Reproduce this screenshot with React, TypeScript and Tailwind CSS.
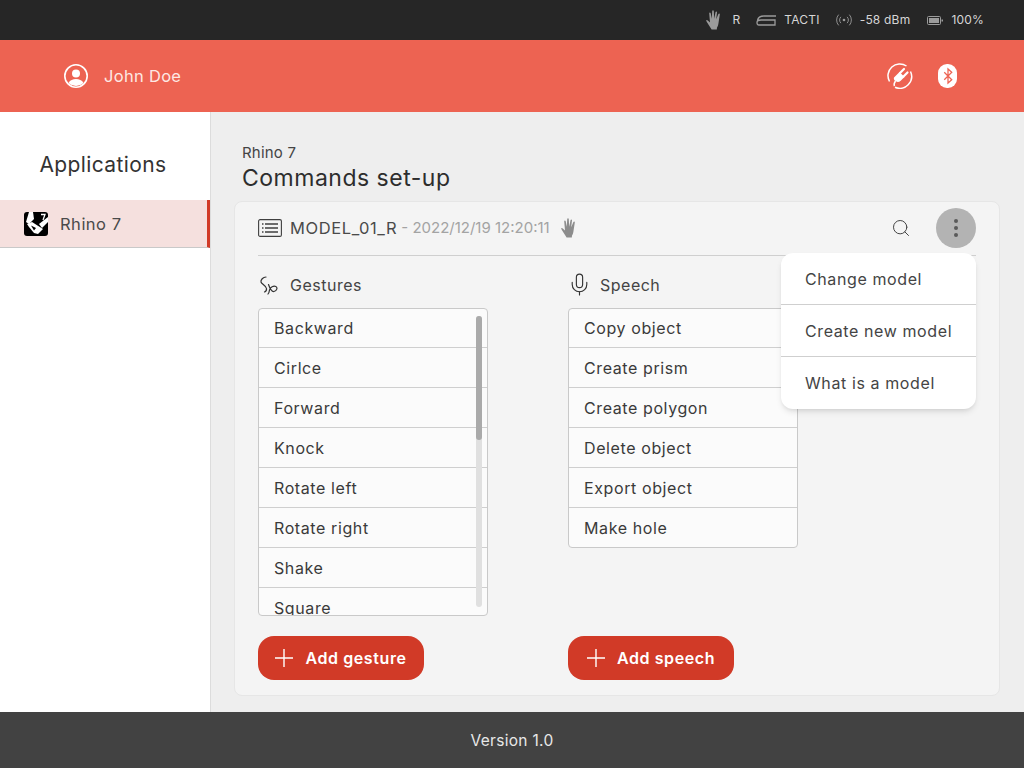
import { Search, Mic } from 'lucide-react'

const FONT = "font-['Inter','Liberation_Sans',sans-serif]"

const GESTURES = ['Backward', 'Cirlce', 'Forward', 'Knock', 'Rotate left', 'Rotate right', 'Shake', 'Square']
const SPEECH = ['Copy object', 'Create prism', 'Create polygon', 'Delete object', 'Export object', 'Make hole']
const MENU = ['Change model', 'Create new model', 'What is a model']

function HandIcon({ className }: { className?: string }) {
  return (
    <svg viewBox="0 0 16 20" className={className} fill="currentColor">
      <path d="M5.600 19.500 1 12.200c-.5-.8-.9-1.600-.7-2 .3-.5 1-.2 1.500.3L4 12.500 3.200 3.300c0-1.200 1.300-1.200 1.500-.1L5.800 8.800 6.200 1.200c.1-1.300 1.500-1.300 1.600 0l.4 7.600L9.500 2.200c.3-1.200 1.600-.9 1.500.2L10.200 9.300l2.200-5.200c.5-1 1.600-.6 1.400.4L12.500 13c-.3 2-.8 3.500-1.500 4.500l-.2 2z" />
    </svg>
  )
}

function RhinoLogo() {
  return (
    <svg viewBox="0 0 24 24" className="w-6 h-6 shrink-0">
      <rect width="24" height="24" rx="3" fill="#000" />
      <path d="M5 0 L9 0 L10 7 L5 12 L2 10 Z" fill="#fff" />
      <path d="M3 12 L8 10 L19 17 L14 22 L10 21 L5 15 Z" fill="#fff" />
      <path d="M7 13.500 L12 16 L10 18.500 Z" fill="#000" />
      <path d="M15 12 L24 5 L24 10 L18 16 Z" fill="#fff" />
      <path d="M17 2.500 H21 L19 8" fill="none" stroke="#fff" strokeWidth="1.300" />
    </svg>
  )
}

function ListBox({ items, scroll }: { items: string[]; scroll?: boolean }) {
  return (
    <div className={`relative w-[230px] overflow-hidden rounded border border-[#c9c9c9] bg-[#fbfbfb] ${scroll ? 'h-[308px]' : ''}`}>
      {items.map((item, i) => (
        <div
          key={item}
          className={`flex items-center pl-[15px] text-[16px] tracking-[0.6px] text-[#3a3a3a] ${i > 0 ? 'h-10 border-t border-[#cfcfcf]' : 'h-[38px]'}`}
        >
          {item}
        </div>
      ))}
      {scroll && (
        <div className="absolute right-[5px] top-[7px] w-1.5 h-[291px] rounded-full bg-[#e0e0e0]">
          <div className="w-1.5 h-[124px] rounded-full bg-[#aaaaaa]" />
        </div>
      )}
    </div>
  )
}

function AddButton({ label }: { label: string }) {
  return (
    <button className="mt-5 flex items-center justify-center h-11 rounded-2xl bg-[#d13a27] text-white text-[16px] tracking-[0.6px] font-semibold w-[166px]">
      <svg viewBox="0 0 18 18" className="w-[18px] h-[18px] mr-3" stroke="#fff" strokeWidth="1.400">
        <path d="M9 0v18M0 9h18" />
      </svg>
      {label}
    </button>
  )
}

export default function App() {
  return (
    <div className={`${FONT} w-[1024px] h-[768px] flex flex-col overflow-hidden`}>
      {/* status bar */}
      <div className="h-10 shrink-0 bg-[#262626] flex items-center justify-end pr-10 text-[12px] tracking-[0.2px] text-[#d6d6d6]">
        <HandIcon className="w-4 h-5 text-[#9b9b9b] mr-[10px]" />
        <span className="mr-4">R</span>
        <svg viewBox="0 0 20 11" className="w-5 h-[11px] mr-2 text-[#9b9b9b]" fill="none" stroke="currentColor" strokeWidth="1.300">
          <path d="M20 1H8C5 1 2 2.500 1.500 5.500M5 5H19V10H3C1.500 10 1 9 1 7.500 1 6 2.500 5 5 5z" />
        </svg>
        <span className="mr-4">TACTI</span>
        <svg viewBox="0 0 18 14" className="w-4 h-[14px] mr-2 text-[#9b9b9b]" fill="none" stroke="currentColor" strokeWidth="1">
          <circle cx="9" cy="7" r="1.500" fill="currentColor" stroke="none" />
          <path d="M5.500 3.500a5 5 0 0 0 0 7M12.500 3.500a5 5 0 0 1 0 7M3 1a9 9 0 0 0 0 12M15 1a9 9 0 0 1 0 12" />
        </svg>
        <span className="mr-[17px]">-58 dBm</span>
        <svg viewBox="0 0 16 9" className="w-4 h-[9px] mr-2 text-[#9b9b9b]" fill="currentColor">
          <rect x="0.500" y="0.500" width="13" height="8" rx="1" fill="none" stroke="currentColor" />
          <rect x="2" y="2" width="10" height="5" />
          <rect x="14.500" y="3.500" width="1.500" height="2" />
        </svg>
        <span>100%</span>
      </div>

      {/* header */}
      <div className="h-[72px] shrink-0 bg-[#ed6352] flex items-center pl-[64px] pr-[67px] text-white">
        <svg viewBox="0 0 24 24" className="w-6 h-6 mr-4">
          <circle cx="12" cy="12" r="11.200" fill="none" stroke="#fff" strokeWidth="1.600" />
          <circle cx="12" cy="9.500" r="4" fill="#fff" />
          <path d="M4.500 19c1.500-3 4.500-4 7.500-4s6 1 7.500 4a11 11 0 0 1-15 0z" fill="#fff" />
        </svg>
        <span className="text-[16.500px] tracking-[0.3px] text-[#fde8e4]">John Doe</span>
        <div className="ml-auto flex items-center">
          <svg viewBox="0 0 26 26" className="w-[26px] h-[26px] mr-[25px]" fill="none" stroke="#fff">
            <path d="M2.500 18.500A11.800 11.800 0 0 1 19.500 3M23.500 8.500A11.800 11.800 0 0 1 8 24.200" strokeWidth="1.500" />
            <path d="M7 14.500 12.500 9l5 5-3.800 3.800c-1.800 1.600-4.200 1.500-5.700 0-1.100-1.100-1.400-2.300-1-3.300z" fill="#fff" stroke="none" />
            <path d="M13 10l4-4M16.500 13.500l4-4" strokeWidth="2.200" strokeLinecap="round" />
            <path d="M8.500 18c-1 1.500-2 3.500-1 5" strokeWidth="1.500" />
          </svg>
          <div className="w-[19px] h-6 rounded-[9px] bg-white flex items-center justify-center">
            <svg viewBox="0 0 12 20" className="w-[10px] h-[18px]" fill="none" stroke="#ed6352" strokeWidth="1.500">
              <path d="M1.500 5.500l9 9L6 18.500V1.500l4.500 4-9 9" />
            </svg>
          </div>
        </div>
      </div>

      <div className="flex-1 flex min-h-0">
        {/* sidebar */}
        <div className="w-[211px] shrink-0 bg-white border-r border-[#dcdcdc] pt-[37px]">
          <div className="text-center text-[21px] tracking-[0.4px] text-[#333] h-[51px] pr-[4px]">Applications</div>
          <div className="h-12 flex items-center pl-6 bg-[#f5e0de] border-r-[3px] border-r-[#d13a27] border-b border-b-[#c9c9c9]">
            <RhinoLogo />
            <span className="ml-3 pt-[2px] text-[16.500px] tracking-[0.5px] text-[#4a4a4a]">Rhino 7</span>
          </div>
        </div>

        {/* main */}
        <div className="flex-1 min-w-0 bg-[#eeeeee] flex flex-col pl-[23px] pr-6 pb-4 pt-[32px]">
          <div className="pl-2 text-[15px] tracking-[0.2px] leading-[18px] text-[#444]">Rhino 7</div>
          <div className="pl-2 text-[23px] tracking-[0.5px] leading-[32px] text-[#2d2d2d]">Commands set-up</div>

          <div className="relative flex-1 mt-[7px] rounded-lg border border-[#e6e6e6] bg-[#f4f4f4] px-[23px]">
            <div className="h-[54px] pb-[1px] flex items-center border-b border-[#cfcfcf]">
              <svg viewBox="0 0 24 18" className="w-6 h-[18px] mr-2 text-[#3f3f3f]" fill="none" stroke="currentColor" strokeWidth="1.100">
                <rect x="0.600" y="0.600" width="22.800" height="16.800" rx="1.500" />
                <path d="M7 5h13M7 9h13M7 13h13M4 5h1.500M4 9h1.500M4 13h1.500" strokeWidth="1.300" />
              </svg>
              <span className="text-[16.500px] tracking-[0.6px] text-[#4a4a4a]">MODEL_01_R</span>
              <span className="text-[15px] text-[#a3a3a3] ml-1">- 2022/12/19 12:20:11</span>
              <HandIcon className="w-4 h-5 ml-[11px] text-[#8c8c8c]" />
              <Search size={20} strokeWidth={1.200} className="ml-auto mr-[25px] text-[#444]" />
              <div className="w-10 h-10 rounded-full bg-[#b3b3b3] flex flex-col items-center justify-center gap-[3px]">
                <span className="w-1 h-1 rounded-full bg-[#5a5a5a]" />
                <span className="w-1 h-1 rounded-full bg-[#5a5a5a]" />
                <span className="w-1 h-1 rounded-full bg-[#5a5a5a]" />
              </div>
            </div>

            <div className="flex gap-20 pt-[13px]">
              <div className="w-[230px]">
                <div className="h-8 mb-[7px] flex items-center text-[16px] tracking-[0.5px] text-[#444]">
                  <svg viewBox="0 0 20 20" className="w-5 h-5 mr-3" fill="none" stroke="#333" strokeWidth="1.200" strokeLinecap="round">
                    <path d="M8 2C5 2 2.500 5 3 7s5 3.500 5.500 6.500c.2 1.500-.8 3-2 3.500" />
                    <path d="M10.500 9.500c1 3 2.500 7.500 5.500 7s3.800-4 1.800-5-5.800.5-6.300 3.500-.5 3.500-1.500 4" />
                  </svg>
                  Gestures
                </div>
                <ListBox items={GESTURES} scroll />
                <AddButton label="Add gesture" />
              </div>
              <div className="w-[230px]">
                <div className="h-8 mb-[7px] flex items-center text-[16px] tracking-[0.5px] text-[#444]">
                  <Mic size={25} strokeWidth={1.100} className="mr-2 -ml-[1px] -mt-[2px] text-[#333]" />
                  Speech
                </div>
                <div className="h-[308px]">
                  <ListBox items={SPEECH} />
                </div>
                <AddButton label="Add speech" />
              </div>
            </div>

            <div className="absolute right-[23px] top-[51px] w-[195px] rounded-xl bg-white shadow-md">
              {MENU.map((m, i) => (
                <div
                  key={m}
                  className={`flex items-center pl-6 text-[16px] tracking-[0.6px] text-[#444] ${i === 0 ? 'h-[51px] pt-[1px]' : i === 1 ? 'h-[52px] border-t border-[#cfcfcf]' : 'h-[53px] border-t border-[#cfcfcf]'}`}
                >
                  {m}
                </div>
              ))}
            </div>
          </div>
        </div>
      </div>

      {/* footer */}
      <div className="h-14 shrink-0 bg-[#424242] flex items-center justify-center pt-[2px] text-[15.500px] tracking-[0.3px] text-[#e8e8e8]">
        Version 1.0
      </div>
    </div>
  )
}
